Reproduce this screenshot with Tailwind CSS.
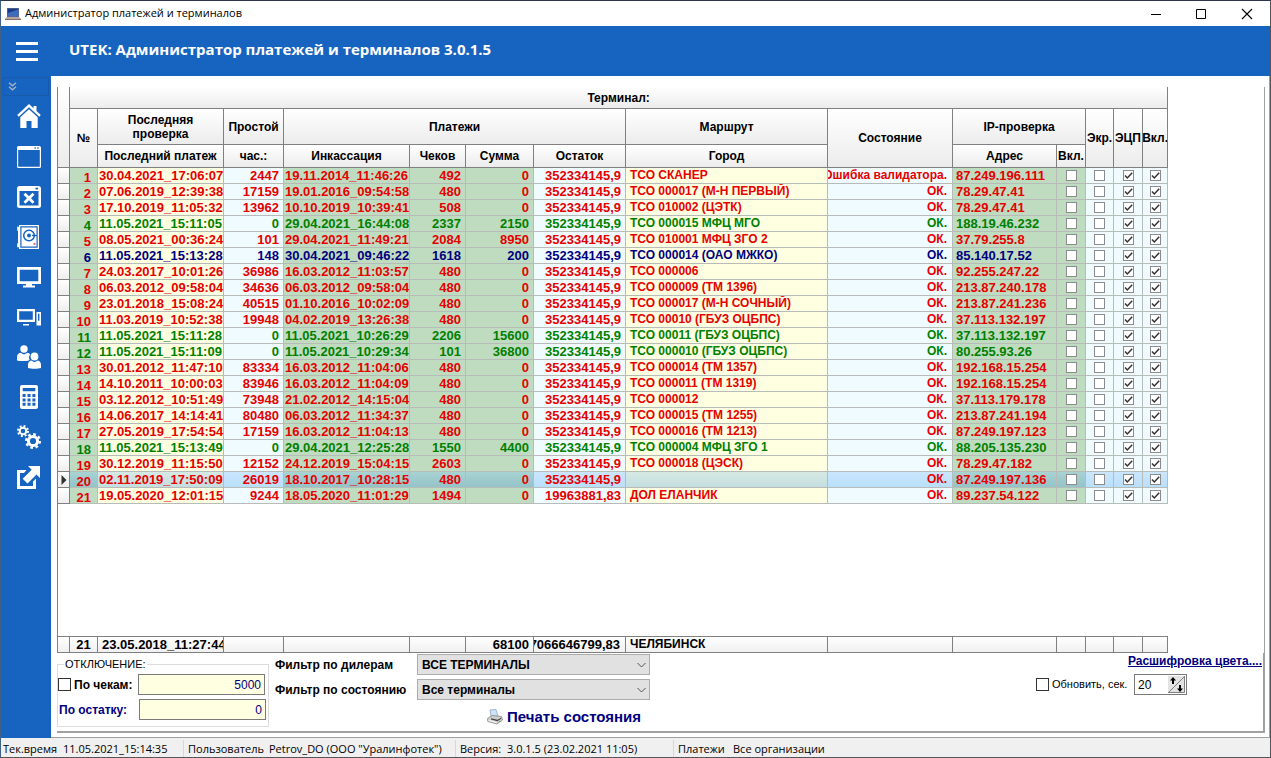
<!DOCTYPE html>
<html lang="ru">
<head>
<meta charset="utf-8">
<title>Администратор платежей и терминалов</title>
<script src="https://cdn.jsdelivr.net/npm/@tailwindcss/browser@4"></script>
</head>
<body class="flex h-screen flex-col overflow-hidden border-t border-r border-b border-l border-t-[#2b3448] border-r-[#55565a] border-b-[#55565a] border-l-[#3d6284] bg-white font-['Liberation_Sans',sans-serif] text-[13px] text-black">

<!-- Title bar -->
<header class="flex h-[25px] shrink-0 items-center bg-white pl-1">
  <svg class="mr-1 h-[14px] w-4" viewBox="0 0 16 14" aria-hidden="true"><path fill="#6a7386" d="M2 1h12v9H2z"/><path fill="#173a8c" d="M2.600 1.600h10.800v7.800H2.600z"/><path fill="#5f93e0" d="M2.600 9.400V6l10.800-3.400v6.800z" opacity=".55"/><path fill="#b9a79d" d="M0 12 1.800 10h12.400L16 12z"/><path fill="#6d6260" d="M0 12h16v.9H0z"/></svg>
  <h1 class="flex-1 font-['Open_Sans',sans-serif] text-[11px]">Администратор платежей и терминалов</h1>
  <button class="flex h-[25px] w-[44px] items-center justify-center" aria-label="Свернуть"><svg class="h-3 w-3" viewBox="0 0 12 12"><path stroke="#000" d="M1 6.500h10"/></svg></button>
  <button class="flex h-[25px] w-[46px] items-center justify-center" aria-label="Развернуть"><svg class="h-3 w-3" viewBox="0 0 12 12"><path fill="none" stroke="#000" d="M1.500 1.500h9v9h-9z"/></svg></button>
  <button class="flex h-[25px] w-[46px] items-center justify-center" aria-label="Закрыть"><svg class="h-3 w-3" viewBox="0 0 12 12"><path stroke="#000" stroke-width="1.100" d="M1 1l10 10M11 1 1 11"/></svg></button>
</header>

<!-- Blue caption -->
<div class="flex h-[50px] shrink-0 items-center bg-[#1664bf] pl-[15px]">
  <button class="flex w-[22px] flex-col gap-[5px]" aria-label="Меню"><span class="h-[3px] bg-white"></span><span class="h-[3px] bg-white"></span><span class="h-[3px] bg-white"></span></button>
  <h2 class="ml-[31px] pb-1 font-['Open_Sans',sans-serif] text-[15px] font-bold text-white">UTEK: Администратор платежей и терминалов 3.0.1.5</h2>
</div>

<div class="flex min-h-0 flex-1">
  <!-- Sidebar -->
  <nav class="flex w-[50px] shrink-0 flex-col bg-[#1664bf]" aria-label="Разделы">
    <button class="mx-0.5 mt-px flex h-[19px] items-center border border-[#1a5cab] pl-1" aria-label="Развернуть панель"><svg class="h-[9px] w-[9px]" viewBox="0 0 9 9" fill="none" stroke="#a9b4c4" stroke-width="1.300"><path d="M1 .8l3.500 3 3.500-3M1 4.800l3.500 3 3.500-3"/></svg></button>
    <button class="flex h-10 items-center pl-4" aria-label="Главная"><svg class="h-6 w-6" viewBox="0 0 24 24" fill="#fff"><path d="M12 0 .2 11l1.600 1.700L12 3.200l10.200 9.500 1.600-1.700L19.500 7V2h-3v2.200z"/><path d="M12 5.200 3.300 13.300V24h6.200v-7h5v7h6.200V13.300z"/></svg></button>
    <button class="flex h-10 items-center pl-4 pt-0.5" aria-label="Окно"><svg class="h-6 w-6" viewBox="0 0 24 24"><path fill="#fff" fill-rule="evenodd" d="M1.500 1h21A1.500 1.500 0 0 1 24 2.500v19a1.500 1.500 0 0 1-1.500 1.500h-21A1.500 1.500 0 0 1 0 21.500v-19A1.500 1.500 0 0 1 1.500 1zM1.200 5v16.800h21.600V5zM17.500 2.300v1.500h1.300V2.300zm2.800 0v1.500h1.300V2.300z"/></svg></button>
    <button class="flex h-10 items-center pl-4 pt-0.5" aria-label="Закрыть окно"><svg class="h-6 w-6" viewBox="0 0 24 24"><path fill="#fff" fill-rule="evenodd" d="M2.500 1h19A2.500 2.500 0 0 1 24 3.500v17a2.500 2.500 0 0 1-2.500 2.500h-19A2.500 2.500 0 0 1 0 20.500v-17A2.500 2.500 0 0 1 2.500 1zM2.500 6v14.500h19V6zM18.500 2.700v1.800H21V2.700z"/><path stroke="#fff" stroke-width="2.800" d="M7.500 8.800l9 9M16.500 8.800l-9 9"/></svg></button>
    <button class="flex h-10 items-center pl-4 pt-0.5" aria-label="Сейф"><svg class="h-6 w-6" viewBox="0 0 24 24"><path fill="#fff" fill-rule="evenodd" d="M2 0h20v24H2v-1.800H.2v-4H1V5.800H.2v-4H2zM3.300 1.300v21.400h17.400V1.300z"/><path fill="#fff" d="M4.500 2.500h15v19h-15z"/><circle cx="12" cy="10.500" r="5.300" fill="none" stroke="#1664bf" stroke-width="1.500"/><circle cx="12" cy="10.500" r="2" fill="#1664bf"/><path stroke="#1664bf" stroke-width="1.300" d="M15 10.500h5"/><path fill="#d8427a" d="M16.500 18.200h2v1.500h-2z"/></svg></button>
    <button class="flex h-10 items-center pl-4 pt-0.5" aria-label="Терминалы"><svg class="h-6 w-6" viewBox="0 0 24 24"><path fill="#fff" fill-rule="evenodd" d="M0 2h24v17H0zM2.700 4.700v11.600h18.600V4.700z"/><path fill="#fff" d="M9 19h6v1.500h3V22.500H6v-2h3z"/></svg></button>
    <button class="flex h-10 items-center pl-4 pt-0.5" aria-label="Устройства"><svg class="h-6 w-6" viewBox="0 0 24 24"><path fill="#fff" fill-rule="evenodd" d="M0 4h18v13H0zM2.200 6.200v8.600h13.600V6.200zM19.500 7H24v13.500h-4.500zM21 8.700v7h1.400v-7z"/><path fill="#fff" d="M6 19h6v1.500H6z"/></svg></button>
    <button class="flex h-10 items-center pl-4 pt-0.5" aria-label="Пользователи"><svg class="h-6 w-6" viewBox="0 0 24 24" fill="#fff"><circle cx="7" cy="4" r="3.700"/><path d="M0 15.500V12c0-2.300 1.300-3.800 3.500-4.300L7 9.500l3.500-1.800c1.300.3 2.200 1 2.700 1.800-1.300 1.500-1.500 3.500-.6 5.200l-.8.800c-3 .8-8.800.8-11.800 0z"/><circle cx="17.500" cy="11.500" r="3.900"/><path d="M11 23v-3.300c0-2.200 1.200-3.700 3.300-4.200l3.200 1.700 3.200-1.700c2.100.5 3.300 2 3.300 4.200V23c-3 .9-10 .9-13 0z"/></svg></button>
    <button class="flex h-10 items-center pl-4 pt-0.5" aria-label="Калькулятор"><svg class="h-6 w-6" viewBox="0 0 24 24"><path fill="#fff" fill-rule="evenodd" d="M5 0h14a2 2 0 0 1 2 2v20a2 2 0 0 1-2 2H5a2 2 0 0 1-2-2V2a2 2 0 0 1 2-2zM5.700 3v3.300h12.600V3z"/><path stroke="#1664bf" stroke-width="3" stroke-dasharray="3 1.900" d="M5.600 10.500h13M5.600 14.900h13M5.600 19.300h13"/></svg></button>
    <button class="flex h-10 items-center pl-4 pt-0.5" aria-label="Настройки"><svg class="h-6 w-6" viewBox="0 0 24 24" fill="none" stroke="#fff"><circle cx="6" cy="6" r="3.300" stroke-width="2"/><circle cx="6" cy="6" r="5" stroke-width="2" stroke-dasharray="1.960 1.960"/><circle cx="16" cy="16" r="4.600" stroke-width="3"/><circle cx="16" cy="16" r="6.800" stroke-width="2.400" stroke-dasharray="2.670 2.670"/></svg></button>
    <button class="flex h-10 items-center pl-4 pt-0.5" aria-label="Выход"><svg class="h-6 w-6" viewBox="0 0 24 24" fill="#fff"><path d="M0 5h9.500L7 8H3v13h13v-4.500l3-3V24H0z"/><path d="M11 1h12v12l-3.500-3.500-9 9-4.800-4.800 9-9z"/></svg></button>
  </nav>

  <main class="flex min-w-0 flex-1 flex-col border-r border-b border-[#a0a0a0] bg-white pt-[11px] pr-1 pl-[6px]">
    <!-- Terminal grid -->
    <section class="flex min-h-0 flex-1 flex-col border-r border-l border-r-[#a0a0a0] border-l-[#808080]">
      <table class="w-[1110px] shrink-0 table-fixed border-separate border-spacing-0" id="grid">
        <colgroup><col class="w-[12px]"><col class="w-[28px]"><col class="w-[126px]"><col class="w-[60px]"><col class="w-[126px]"><col class="w-[56px]"><col class="w-[68px]"><col class="w-[92px]"><col class="w-[202px]"><col class="w-[125px]"><col class="w-[104px]"><col class="w-[29px]"><col class="w-[28px]"><col class="w-[29px]"><col class="w-[25px]"></colgroup>
        <thead class="text-[12px] leading-[14px] [&_th]:border-r [&_th]:border-b [&_th]:border-[#808080] [&_th]:bg-linear-to-b [&_th]:from-white [&_th]:to-[#ececec] [&_th]:p-0 [&_th]:align-middle [&_th]:font-bold">
          <tr class="h-[22px]"><th rowspan="3" aria-label="Указатель"></th><th colspan="14">Терминал:</th></tr>
          <tr class="h-[36px]"><th rowspan="2">№</th><th>Последняя<br>проверка</th><th>Простой</th><th colspan="4">Платежи</th><th>Маршрут</th><th rowspan="2">Состояние</th><th colspan="2">IP-проверка</th><th rowspan="2"><div class="flex justify-center overflow-hidden">Экр.</div></th><th rowspan="2"><div class="flex justify-center overflow-hidden">ЭЦП</div></th><th rowspan="2"><div class="flex justify-center overflow-hidden">Вкл.</div></th></tr>
          <tr class="h-[23px]"><th>Последний платеж</th><th>час.:</th><th>Инкассация</th><th>Чеков</th><th>Сумма</th><th>Остаток</th><th>Город</th><th>Адрес</th><th><div class="flex justify-center overflow-hidden">Вкл.</div></th></tr>
        </thead>
        <tbody class="text-[13px] leading-[15px] font-bold [&_td]:h-4 [&_td]:overflow-hidden [&_td]:border-r [&_td]:border-b [&_td]:border-[#b8bcb8] [&_td]:p-0 [&_td]:whitespace-nowrap" id="rows"></tbody>
      </table>
      <div class="flex-1"></div>
      <table class="w-[1110px] shrink-0 table-fixed border-separate border-spacing-0" aria-label="Итоги">
        <colgroup><col class="w-[12px]"><col class="w-[28px]"><col class="w-[126px]"><col class="w-[60px]"><col class="w-[126px]"><col class="w-[56px]"><col class="w-[68px]"><col class="w-[92px]"><col class="w-[202px]"><col class="w-[125px]"><col class="w-[104px]"><col class="w-[29px]"><col class="w-[28px]"><col class="w-[29px]"><col class="w-[25px]"></colgroup>
        <tbody><tr class="text-[13px] leading-[15px] font-bold [&_td]:h-[17px] [&_td]:overflow-hidden [&_td]:border-y [&_td]:border-r [&_td]:border-[#808080] [&_td]:bg-linear-to-b [&_td]:from-white [&_td]:to-[#f0f0f0] [&_td]:p-0 [&_td]:whitespace-nowrap"><td></td><td><div class="text-center">21</div></td><td><div class="pl-1">23.05.2018_11:27:44</div></td><td></td><td></td><td></td><td><div class="pr-1 text-right">68100</div></td><td><div class="flex justify-end pr-[5px]">7066646799,83</div></td><td><div class="pl-1 text-[12px]">ЧЕЛЯБИНСК</div></td><td></td><td></td><td></td><td></td><td></td><td></td></tr></tbody>
      </table>
    </section>

    <!-- Options under the grid -->
    <form class="mb-1 flex h-20 shrink-0 items-start border-r-2 border-b-2 border-[#a0a0a0] text-[12px]">
      <fieldset class="mt-px h-[73px] w-[212px] shrink-0 border border-[#dcdcdc]">
        <legend class="ml-[6px] px-px text-[11px] leading-[20px]">ОТКЛЮЧЕНИЕ:</legend>
        <div class="flex items-center">
          <input type="checkbox" id="by-checks" class="h-[13px] w-[13px] shrink-0 appearance-none border border-[#333] bg-white">
          <label for="by-checks" class="w-[67px] pl-[3px] font-bold">По чекам:</label>
          <input type="text" value="5000" aria-label="Порог по чекам" class="h-[21px] w-[127px] border border-[#7a7a7a] bg-[#ffffe1] pr-[3px] text-right text-[12px] text-[#000080]">
        </div>
        <div class="mt-1 flex items-center">
          <label for="by-rest" class="w-[81px] pl-px font-bold text-[#000080]">По остатку:</label>
          <input type="text" id="by-rest" value="0" class="h-[21px] w-[127px] border border-[#7a7a7a] bg-[#ffffe1] pr-[3px] text-right text-[12px] text-[#000080]">
        </div>
      </fieldset>
      <div class="flex flex-col pt-px pl-[6px]">
        <div class="flex items-center"><label for="dealer" class="w-[142px] font-bold">Фильтр по дилерам</label>
          <span class="grid items-center"><select id="dealer" class="col-start-1 row-start-1 h-[21px] w-[233px] appearance-none border border-[#adadad] bg-[#e1e1e1] pl-1 text-[12px] font-bold"><option>ВСЕ ТЕРМИНАЛЫ</option></select><svg class="pointer-events-none col-start-1 row-start-1 mr-1 h-2 w-[9px] justify-self-end" viewBox="0 0 9 8" fill="none" stroke="#555"><path d="M.5 2l4 4 4-4"/></svg></span></div>
        <div class="mt-1 flex items-center"><label for="state" class="w-[142px] font-bold">Фильтр по состоянию</label>
          <span class="grid items-center"><select id="state" class="col-start-1 row-start-1 h-[21px] w-[233px] appearance-none border border-[#adadad] bg-[#e1e1e1] pl-1 text-[12px] font-bold"><option>Все терминалы</option></select><svg class="pointer-events-none col-start-1 row-start-1 mr-1 h-2 w-[9px] justify-self-end" viewBox="0 0 9 8" fill="none" stroke="#555"><path d="M.5 2l4 4 4-4"/></svg></span></div>
        <button type="button" class="mt-2 ml-[212px] flex items-center gap-1 text-[15px] leading-[18px] font-bold text-[#000080]"><svg class="h-4 w-4" viewBox="0 0 16 16" aria-hidden="true"><path fill="#cfe3fa" stroke="#7f9cc4" stroke-width=".7" d="M3 1l6-.6 2 6.600-6.500 2z"/><path fill="#d0d0d0" stroke="#777" stroke-width=".7" d="M.5 9.500 5 6.500l9.500 1 1 3.500-5.500 4L.8 12.500z"/><path fill="#444" d="M4 9.200l6.500 1.600 3.500-2 .2 1-3.700 2.500L4 10.500z"/><path fill="#f4f4f4" d="M1.500 10.800l8 2.200v1.300l-8-2.200z"/><path fill="#4caf50" d="M12 12h1.500v1H12z"/></svg>Печать состояния</button>
      </div>
      <div class="ml-auto flex flex-col items-end">
        <a href="#" class="pt-px pr-px text-[12px] leading-[15px] font-bold whitespace-nowrap text-[#000080] underline">Расшифровка цвета....</a>
        <div class="mt-[5px] mr-[76px] flex items-center">
          <input type="checkbox" id="refresh" class="h-[13px] w-[13px] shrink-0 appearance-none border border-[#333] bg-white">
          <label for="refresh" class="w-[85px] pl-[3px] text-[11px] whitespace-nowrap">Обновить, сек.</label>
          <span class="flex h-[21px] w-[53px] items-center border border-[#7a7a7a] bg-white pr-px">
            <input type="text" value="20" aria-label="Период обновления" class="w-0 min-w-0 flex-1 pl-[3px] text-[12px]">
            <button type="button" class="h-[17px] w-[17px]" aria-label="Изменить период"><svg class="h-[17px] w-[17px]" viewBox="0 0 17 17"><path fill="#e3e3e3" d="M0 0h17v17H0z"/><path fill="none" stroke="#808080" d="M0 16.500h16.500V0M0 17 17 0"/><path d="M5 1l3 3.500H6V8H4V4.500H2zM12 16l3-3.500h-2V9h-2v3.500H9z"/></svg></button>
          </span>
        </div>
      </div>
    </form>
  </main>
</div>

<!-- Status bar -->
<footer class="flex h-[19px] shrink-0 items-center bg-[#f0f0f0] pt-0.5 pl-0.5 font-['Open_Sans',sans-serif] text-[11px] leading-[17px] whitespace-nowrap">
  <span class="w-[60px]">Тек.время</span><span class="w-[120px]">11.05.2021_15:14:35</span>
  <span class="w-[82px] border-l border-[#d7d7d7] pl-1">Пользователь</span><span class="w-[190px] pl-1">Petrov_DO (ООО "Уралинфотек")</span>
  <span class="w-[52px] border-l border-[#d7d7d7] pl-1">Версия:</span><span class="w-[166px]">3.0.1.5 (23.02.2021 11:05)</span>
  <span class="w-[60px] border-l border-[#d7d7d7] pl-1">Платежи</span><span>Все организации</span>
</footer>

<script>
// r = red (offline), g = green (online), b = blue (recent)
const data = `r|30.04.2021_17:06:07|2447|19.11.2014_11:46:26|492|0|352334145,9|ТСО СКАНЕР|Ошибка валидатора.|87.249.196.111
r|07.06.2019_12:39:38|17159|19.01.2016_09:54:58|480|0|352334145,9|ТСО 000017 (М-Н ПЕРВЫЙ)|ОК.|78.29.47.41
r|17.10.2019_11:05:32|13962|10.10.2019_10:39:41|508|0|352334145,9|ТСО 010002 (ЦЭТК)|ОК.|78.29.47.41
g|11.05.2021_15:11:05|0|29.04.2021_16:44:08|2337|2150|352334145,9|ТСО 000015 МФЦ МГО|ОК.|188.19.46.232
r|08.05.2021_00:36:24|101|29.04.2021_11:49:21|2084|8950|352334145,9|ТСО 010001 МФЦ ЗГО 2|ОК.|37.79.255.8
b|11.05.2021_15:13:28|148|30.04.2021_09:46:22|1618|200|352334145,9|ТСО 000014 (ОАО МЖКО)|ОК.|85.140.17.52
r|24.03.2017_10:01:26|36986|16.03.2012_11:03:57|480|0|352334145,9|ТСО 000006|ОК.|92.255.247.22
r|06.03.2012_09:58:04|34636|06.03.2012_09:58:04|480|0|352334145,9|ТСО 000009 (ТМ 1396)|ОК.|213.87.240.178
r|23.01.2018_15:08:24|40515|01.10.2016_10:02:09|480|0|352334145,9|ТСО 000017 (М-Н СОЧНЫЙ)|ОК.|213.87.241.236
r|11.03.2019_10:52:38|19948|04.02.2019_13:26:38|480|0|352334145,9|ТСО 00010 (ГБУЗ ОЦБПС)|ОК.|37.113.132.197
g|11.05.2021_15:11:28|0|11.05.2021_10:26:29|2206|15600|352334145,9|ТСО 00011 (ГБУЗ ОЦБПС)|ОК.|37.113.132.197
g|11.05.2021_15:11:09|0|11.05.2021_10:29:34|101|36800|352334145,9|ТСО 000010 (ГБУЗ ОЦБПС)|ОК.|80.255.93.26
r|30.01.2012_11:47:10|83334|16.03.2012_11:04:06|480|0|352334145,9|ТСО 000014 (ТМ 1357)|ОК.|192.168.15.254
r|14.10.2011_10:00:03|83946|16.03.2012_11:04:09|480|0|352334145,9|ТСО 000011 (ТМ 1319)|ОК.|192.168.15.254
r|03.12.2012_10:51:49|73948|21.02.2012_14:15:04|480|0|352334145,9|ТСО 000012|ОК.|37.113.179.178
r|14.06.2017_14:14:41|80480|06.03.2012_11:34:37|480|0|352334145,9|ТСО 000015 (ТМ 1255)|ОК.|213.87.241.194
r|27.05.2019_17:54:54|17159|16.03.2012_11:04:13|480|0|352334145,9|ТСО 000016 (ТМ 1213)|ОК.|87.249.197.123
g|11.05.2021_15:13:49|0|29.04.2021_12:25:28|1550|4400|352334145,9|ТСО 000004 МФЦ ЗГО 1|ОК.|88.205.135.230
r|30.12.2019_11:15:50|12152|24.12.2019_15:04:15|2603|0|352334145,9|ТСО 000018 (ЦЭСК)|ОК.|78.29.47.182
r|02.11.2019_17:50:09|26019|18.10.2017_10:28:15|480|0|352334145,9||ОК.|87.249.197.136
r|19.05.2020_12:01:15|9244|18.05.2020_11:01:29|1494|0|19963881,83|ДОЛ ЕЛАНЧИК|ОК.|89.237.54.122`.split('\n').map(l => l.split('|'));
const text = { r: 'text-[#e60000]', g: 'text-[#008000]', b: 'text-[#000080]' };
const bg = { green: 'bg-[#c0dcc0]', yellow: 'bg-[#ffffe1]', cyan: 'bg-[#f0fbff]' };
const selBg = { green: 'bg-linear-to-b from-[#a9d2d2] to-[#94c3c8]', yellow: 'bg-linear-to-b from-[#d6e9e4] to-[#c4dedf]', cyan: 'bg-linear-to-b from-[#cbe6fd] to-[#b9dffd]' };
const tones = ['yellow', 'cyan', 'green', 'green', 'green', 'cyan', 'yellow', 'cyan', 'green'];
const date = 'pl-px', left = 'pl-[3px]', right = 'flex justify-end pr-1';
const aligns = [date, right, date, right, right, right, 'pl-1 text-[12px]', 'flex justify-end pr-[5px] text-[12px]', left];
const box = (on, label) => `<input type="checkbox" aria-label="${label}" ${on ? 'checked' : ''} class="col-start-1 row-start-1 h-[11px] w-[11px] appearance-none border border-[#8c8c8c] bg-white">` +
  (on ? '<svg class="pointer-events-none col-start-1 row-start-1 h-[11px] w-[11px]" viewBox="0 0 11 11" fill="none" stroke="#333" stroke-width="1.500"><path d="M2 5.500l2.300 2.500L9.200 2.800"/></svg>' : '');
document.getElementById('rows').innerHTML = data.map(([c, ...v], i) => {
  const sel = i === 19, pal = sel ? selBg : bg;
  const marker = sel ? '<svg class="mx-auto h-[10px] w-[6px]" viewBox="0 0 6 10"><path fill="#333" d="M.5 0 5.500 5 .5 10z"/></svg>' : '';
  const cells = v.map((t, k) => `<td class="${pal[tones[k]]}"><div class="${aligns[k]}">${t}</div></td>`).join('');
  const boxes = [['green', false, 'IP-проверка'], ['cyan', false, 'Экр.'], ['cyan', true, 'ЭЦП'], ['cyan', true, 'Вкл.']]
    .map(([tone, on, l]) => `<td class="${pal[tone]}"><div class="grid h-[15px] place-content-center">${box(on, l)}</div></td>`).join('');
  return `<tr class="${text[c]}"><td class="border-[#808080]! bg-linear-to-b from-white to-[#eeeeee]">${marker}</td><td class="${pal.green}"><div class="flex h-[15px] justify-end pt-0.5 pr-[6px]">${i + 1}</div></td>${cells}${boxes}</tr>`;
}).join('');
</script>
</body>
</html>
